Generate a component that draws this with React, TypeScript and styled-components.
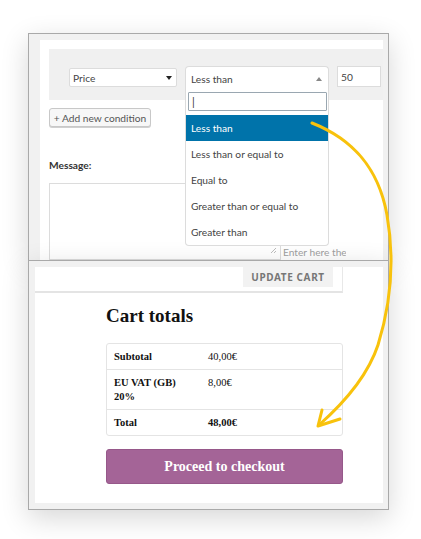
import React from 'react';
import styled, { createGlobalStyle } from 'styled-components';

const Global = createGlobalStyle`
  html, body { margin: 0; padding: 0; background: #fff; }
  body { width: 421px; height: 539px; overflow: hidden; font-family: Lato, "Liberation Sans", sans-serif; }
  * { box-sizing: border-box; }
`;

const Page = styled.div`
  position: relative;
  width: 421px;
  height: 539px;
  padding: 33px 0 0 28px;
`;

const Frame = styled.div`
  width: 361px;
  display: flex;
  flex-direction: column;
`;

const Shot = styled.div`
  position: relative;
  background: #f1f1f1;
  border: 1px solid #a9a9a9;
  box-shadow: 0 8px 26px rgba(0, 0, 0, 0.16);
`;

const TopShot = styled(Shot)`
  height: 227px;
  border-bottom: none;
  padding: 6px 5px 0 11px;
  overflow: hidden;
`;

const BottomShot = styled(Shot)`
  height: 250px;
  padding: 6px 5px 6px 6px;
  display: flex;
`;

const AdminCard = styled.div`
  background: #fff;
  height: 100%;
  padding: 9px 0 0 9px;
  display: flex;
  flex-direction: column;
  align-items: flex-start;
  color: #444;
  font-size: 10.2px;
`;

const ConditionBox = styled.div`
  align-self: stretch;
  height: 54px;
  background: #f0f0f0;
  display: flex;
  align-items: flex-start;
  gap: 8px;
  padding: 17px 0 0 20px;
`;

const NativeSelect = styled.div`
  margin-top: 2px;
  width: 108px;
  height: 19px;
  background: #fff;
  border: 1px solid #dcdcdc;
  border-radius: 2px;
  display: flex;
  align-items: center;
  justify-content: space-between;
  padding: 0 4px 0 3px;
`;

const Caret = styled.span<{ $up?: boolean; $color?: string }>`
  width: 0;
  height: 0;
  border-left: 3px solid transparent;
  border-right: 3px solid transparent;
  ${(p) =>
    p.$up
      ? `border-bottom: 4px solid ${p.$color || '#888'};`
      : `border-top: 4px solid ${p.$color || '#222'};`}
`;

const Select2 = styled.div`
  position: relative;
  width: 144px;
  height: 23px;
  background: #fff;
  border: 1px solid #dcdcdc;
  border-bottom: none;
  border-radius: 4px 4px 0 0;
  display: flex;
  align-items: center;
  justify-content: space-between;
  padding: 1px 6px 0 5px;
  z-index: 5;
`;

const Dropdown = styled.div`
  position: absolute;
  top: 100%;
  left: -1px;
  width: 144px;
  background: #fff;
  border: 1px solid #dcdcdc;
  border-top: none;
  border-radius: 0 0 4px 4px;
  display: flex;
  flex-direction: column;
`;

const Search = styled.div`
  margin: 3px 1px 4px 2px;
  height: 19px;
  border: 1px solid #9aa7b1;
  border-radius: 1px;
  display: flex;
  align-items: center;
  padding-left: 3px;
  color: #333;
  font-size: 11px;
`;

const Option = styled.div<{ $active?: boolean }>`
  height: 26px;
  line-height: 26px;
  padding-left: 5px;
  white-space: nowrap;
  color: ${(p) => (p.$active ? '#fff' : '#444')};
  background: ${(p) => (p.$active ? '#0073aa' : 'transparent')};
`;

const NumberInput = styled.div`
  width: 44px;
  height: 21px;
  background: #fff;
  border: 1px solid #dcdcdc;
  display: flex;
  align-items: center;
  padding-left: 3px;
`;

const AddButton = styled.div`
  margin-top: 8px;
  width: 102px;
  height: 20px;
  border: 1px solid #c8c8c8;
  border-radius: 3px;
  background: #f7f7f7;
  box-shadow: 0 1px 0 #d0d0d0;
  display: flex;
  align-items: center;
  justify-content: center;
  color: #555;
`;

const Label = styled.div`
  margin-top: 31px;
  font-weight: 700;
  line-height: 14px;
  color: #333;
`;

const MessageRow = styled.div`
  margin-top: 11px;
  display: flex;
  align-items: flex-end;
`;

const TextArea = styled.div`
  position: relative;
  width: 232px;
  height: 77px;
  border: 1px solid #dcdcdc;
  background: #fff;
`;

const Grip = styled.svg`
  position: absolute;
  right: 3px;
  bottom: 5px;
`;

const Hint = styled.div`
  width: 65px;
  overflow: hidden;
  white-space: nowrap;
  color: #a0a0a0;
  padding: 0 0 2px 2px;
`;

const CartCard = styled.div`
  flex: 1;
  background: #fff;
  display: flex;
  flex-direction: column;
`;

const CartHeader = styled.div`
  width: 308px;
  height: 26px;
  display: flex;
  justify-content: flex-end;
  padding-right: 9px;
  border-bottom: 2px solid #e4e4e4;
  border-right: 1px solid #e8e8e8;
`;

const UpdateButton = styled.div`
  width: 90px;
  height: 20px;
  background: #f2f2f2;
  color: #777;
  font-family: "Noto Sans", sans-serif;
  font-weight: 700;
  font-size: 10px;
  letter-spacing: 0.6px;
  display: flex;
  align-items: center;
  justify-content: center;
`;

const Totals = styled.div`
  margin-left: 71px;
  width: 237px;
  display: flex;
  flex-direction: column;
  font-family: "Liberation Serif", serif;
  color: #111;
`;

const Heading = styled.h2`
  margin: 12px 0 0;
  font-size: 19px;
  line-height: 22px;
  font-weight: 700;
`;

const TotalsTable = styled.div`
  margin-top: 16px;
  border: 1px solid #e4e4e4;
  border-radius: 3px;
`;

const TotalsRow = styled.div`
  display: grid;
  grid-template-columns: 94px 1fr;
  & + & {
    border-top: 1px solid #e4e4e4;
  }
`;

const Cell = styled.div<{ $bold?: boolean }>`
  padding: 6px 7px 5px;
  font-size: 10.5px;
  line-height: 14px;
  font-weight: ${(p) => (p.$bold ? 700 : 400)};
`;

const Checkout = styled.div`
  margin-top: 13px;
  height: 35px;
  background: #a46497;
  border: 1px solid #96588a;
  border-radius: 3px;
  color: #fff;
  font-size: 14px;
  font-weight: 700;
  display: flex;
  align-items: center;
  justify-content: center;
`;

const Arrow = styled.svg`
  position: absolute;
  left: 0;
  top: 0;
  pointer-events: none;
  z-index: 10;
`;

const options = [
  'Less than',
  'Less than or equal to',
  'Equal to',
  'Greater than or equal to',
  'Greater than',
];

export default function App() {
  return (
    <Page>
      <Global />
      <Frame>
        <TopShot>
          <AdminCard>
            <ConditionBox>
              <NativeSelect>
                <span>Price</span>
                <Caret />
              </NativeSelect>
              <Select2>
                <span>Less than</span>
                <Caret $up />
                <Dropdown>
                  <Search>|</Search>
                  {options.map((o, i) => (
                    <Option key={o} $active={i === 0}>
                      {o}
                    </Option>
                  ))}
                </Dropdown>
              </Select2>
              <NumberInput>50</NumberInput>
            </ConditionBox>
            <AddButton>+ Add new condition</AddButton>
            <Label>Message:</Label>
            <MessageRow>
              <TextArea>
                <Grip width="7" height="7" viewBox="0 0 7 7">
                  <path d="M1 6 L6 1 M4 6 L6 4" stroke="#b5b5b5" strokeWidth="0.9" />
                </Grip>
              </TextArea>
              <Hint>Enter here the text</Hint>
            </MessageRow>
          </AdminCard>
        </TopShot>
        <BottomShot>
          <CartCard>
            <CartHeader>
              <UpdateButton>UPDATE CART</UpdateButton>
            </CartHeader>
            <Totals>
              <Heading>Cart totals</Heading>
              <TotalsTable>
                <TotalsRow>
                  <Cell $bold>Subtotal</Cell>
                  <Cell>40,00€</Cell>
                </TotalsRow>
                <TotalsRow>
                  <Cell $bold>
                    EU VAT (GB)
                    <br />
                    20%
                  </Cell>
                  <Cell>8,00€</Cell>
                </TotalsRow>
                <TotalsRow>
                  <Cell $bold>Total</Cell>
                  <Cell $bold>48,00€</Cell>
                </TotalsRow>
              </TotalsTable>
              <Checkout>Proceed to checkout</Checkout>
            </Totals>
          </CartCard>
        </BottomShot>
      </Frame>
      <Arrow width="421" height="539" viewBox="0 0 421 539">
        <g fill="none" stroke="#f8c20c" strokeWidth="3" strokeLinecap="round" strokeLinejoin="round">
          <path d="M312 123 C350 138 378 165 387 215 C394 255 392 300 378 345 C368 375 345 402 319 425" />
          <path d="M322 410 L318 426 L340 419" />
        </g>
      </Arrow>
    </Page>
  );
}
